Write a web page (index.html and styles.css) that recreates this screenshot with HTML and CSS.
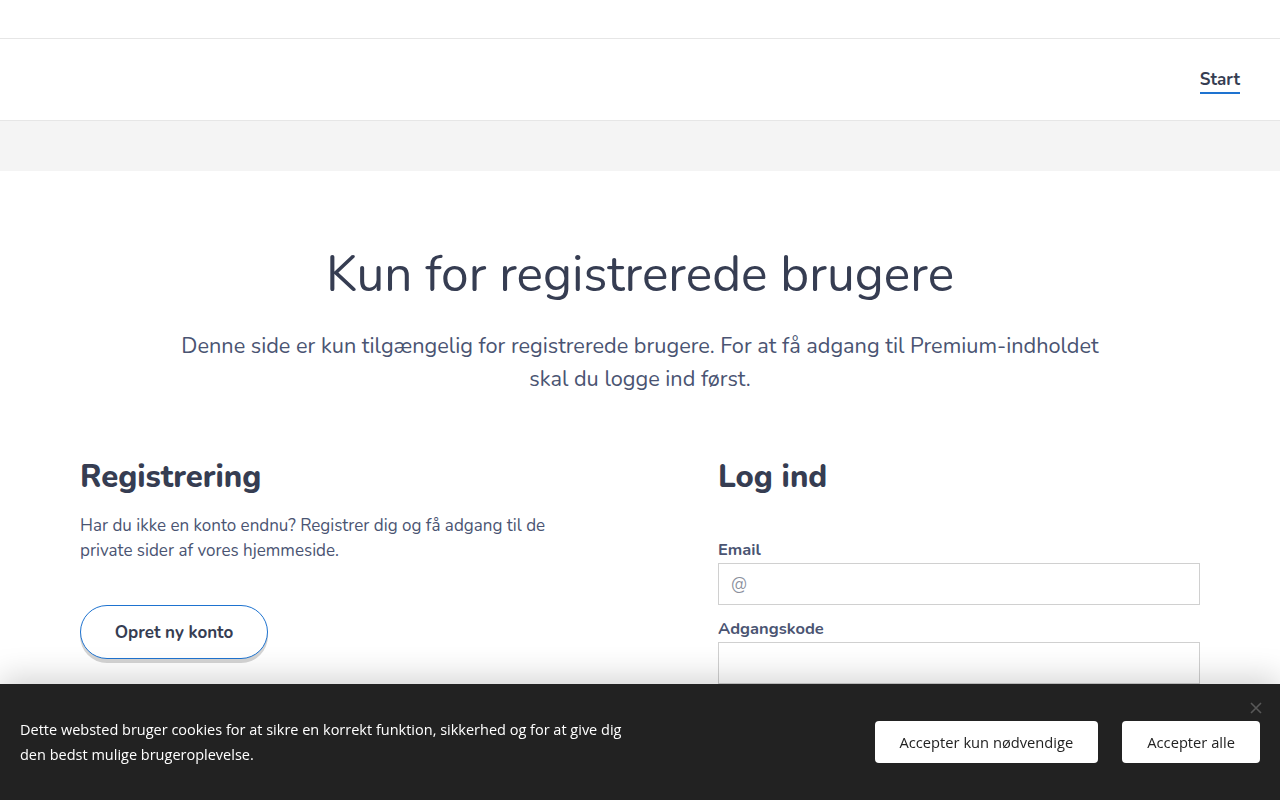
FILE: index.html
```html
<!DOCTYPE html>
<html lang="da">
<head>
    <meta charset="UTF-8">
    <title>Kun for registrerede brugere</title>
    <link rel="stylesheet" href="styles.css">
</head>
<body>
    <div class="topbar"></div>

    <header class="header">
        <nav class="nav">
            <a href="#" class="nav-link active">Start</a>
        </nav>
    </header>

    <div class="band"></div>

    <main class="content">
        <h1>Kun for registrerede brugere</h1>
        <p class="lead">Denne side er kun tilgængelig for registrerede brugere. For at få adgang til Premium-indholdet skal du logge ind først.</p>

        <div class="columns">
            <section class="register">
                <h2>Registrering</h2>
                <p>Har du ikke en konto endnu? Registrer dig og få adgang til de private sider af vores hjemmeside.</p>
                <button class="btn-outline">Opret ny konto</button>
            </section>

            <section class="login">
                <h2>Log ind</h2>
                <form class="login-form">
                    <div class="form-group">
                        <label for="email">Email</label>
                        <input type="text" id="email" placeholder="@">
                    </div>
                    <div class="form-group">
                        <label for="password">Adgangskode</label>
                        <input type="password" id="password">
                    </div>
                </form>
            </section>
        </div>
    </main>

    <div class="cookie-bar">
        <p>Dette websted bruger cookies for at sikre en korrekt funktion, sikkerhed og for at give dig den bedst mulige brugeroplevelse.</p>
        <div class="cookie-actions">
            <button class="cookie-btn">Accepter kun nødvendige</button>
            <button class="cookie-btn">Accepter alle</button>
        </div>
        <svg class="cookie-close" width="12" height="12" viewBox="0 0 12 12">
            <path d="M1 1 L11 11 M11 1 L1 11" stroke="#585858" stroke-width="1.6" fill="none"/>
        </svg>
    </div>
</body>
</html>
```

FILE: styles.css
```css
body {
    font-family: Nunito, Lato, sans-serif;
    margin: 0;
    color: #363d52;
    background-color: white;
}
.topbar {
    height: 38px;
    border-bottom: 1px solid #e6e6e6;
}
.header {
    height: 82px;
    box-sizing: border-box;
    border-bottom: 1px solid #e6e6e6;
    display: flex;
    align-items: flex-start;
    justify-content: flex-end;
    padding: 29px 40px 0;
}
.nav-link {
    display: block;
    color: #363d52;
    font-weight: 700;
    font-size: 17px;
    text-decoration: none;
    padding-bottom: 1px;
    border-bottom: 2px solid #1e73d0;
}
.band {
    height: 50px;
    background-color: #f4f4f4;
}
.content {
    max-width: 1120px;
    margin: 0 auto;
    padding: 72px 0 0;
}
h1 {
    text-align: center;
    font-size: 49.6px;
    font-weight: 400;
    margin: 0;
    line-height: 64px;
}
.lead {
    text-align: center;
    font-size: 21.7px;
    line-height: 33px;
    color: #4a5472;
    max-width: 940px;
    margin: 23px auto 0;
}
.columns {
    display: grid;
    grid-template-columns: 1fr 482px;
    gap: 156px;
    margin-top: 61px;
}
h2 {
    font-size: 31px;
    font-weight: 800;
    margin: 0;
    line-height: 40px;
}
.register p {
    font-size: 17px;
    line-height: 25px;
    color: #4a5472;
    max-width: 480px;
    margin: 16px 0 42px;
}
.btn-outline {
    font-family: inherit;
    font-size: 17px;
    font-weight: 700;
    color: #363d52;
    background-color: white;
    border: 1px solid #1e73d0;
    border-radius: 27px;
    height: 54px;
    width: 188px;
    box-shadow: 0 4px 0 #d4d4d4;
    cursor: pointer;
}
.login-form {
    margin-top: 42px;
}
.form-group {
    margin-bottom: 13px;
}
label {
    display: block;
    font-size: 16.5px;
    font-weight: 700;
    color: #4a5472;
    line-height: 22px;
    margin-bottom: 2px;
}
input[type="text"],
input[type="password"] {
    width: 100%;
    height: 42px;
    padding: 0 12px;
    border: 1px solid #d0d0d0;
    box-sizing: border-box;
    font-family: inherit;
    font-size: 17px;
}
input::placeholder {
    color: #8a8f9c;
}
.cookie-bar {
    position: fixed;
    left: 0;
    right: 0;
    bottom: 0;
    height: 116px;
    box-sizing: border-box;
    background-color: #222;
    box-shadow: 0 -6px 30px rgba(0, 0, 0, 0.18);
    display: flex;
    align-items: center;
    justify-content: space-between;
    padding: 0 20px;
    font-family: "Open Sans", sans-serif;
}
.cookie-bar p {
    color: white;
    font-size: 14.5px;
    line-height: 25px;
    max-width: 610px;
    margin: 0;
}
.cookie-actions {
    display: flex;
    gap: 24px;
}
.cookie-btn {
    font-family: "Open Sans", sans-serif;
    font-size: 14.7px;
    color: #222;
    background-color: white;
    border: none;
    border-radius: 4px;
    height: 42px;
    padding: 0 25px;
    cursor: pointer;
}
.cookie-close {
    position: absolute;
    top: 18px;
    right: 18px;
}
```
